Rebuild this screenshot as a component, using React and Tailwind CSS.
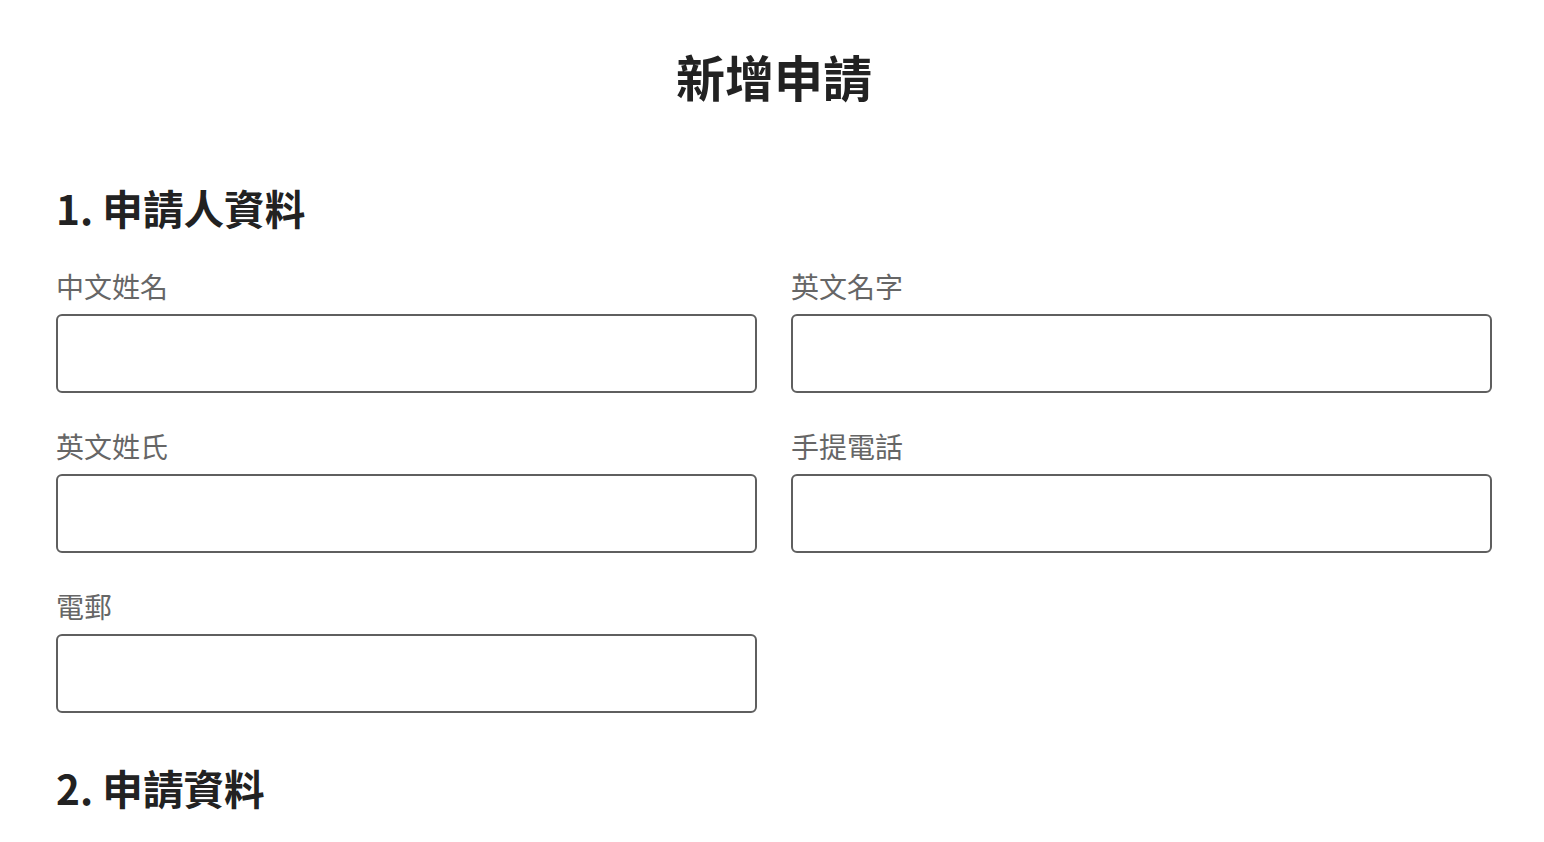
const font = { fontFamily: '"Noto Sans CJK TC", "Noto Sans", sans-serif' };

function Field({ label }) {
  return (
    <div className="flex flex-col">
      <label className="text-[28px] leading-[42px] text-[#666666] mb-[7px]">{label}</label>
      <input
        type="text"
        className="h-[79px] w-full rounded-[6px] border-2 border-[#5f5f5f] bg-white px-4 text-[24px] outline-none"
      />
    </div>
  );
}

export default function App() {
  return (
    <div className="min-h-screen bg-white text-[#222222]" style={font}>
      <div className="pl-[56px] pr-[52px]">
        <h1 className="mt-[40px] text-center text-[49px] leading-[72px] font-bold">新增申請</h1>

        {/* Section 1 */}
        <h2 className="mt-[66px] text-[40.6px] leading-[60px] font-bold">1. 申請人資料</h2>
        <div className="mt-[27px] grid grid-cols-2 gap-x-[34px] gap-y-[32px]">
          <Field label="中文姓名" />
          <Field label="英文名字" />
          <Field label="英文姓氏" />
          <Field label="手提電話" />
          <Field label="電郵" />
        </div>

        {/* Section 2 */}
        <h2 className="mt-[45px] text-[40.6px] leading-[60px] font-bold">2. 申請資料</h2>
      </div>
    </div>
  );
}
